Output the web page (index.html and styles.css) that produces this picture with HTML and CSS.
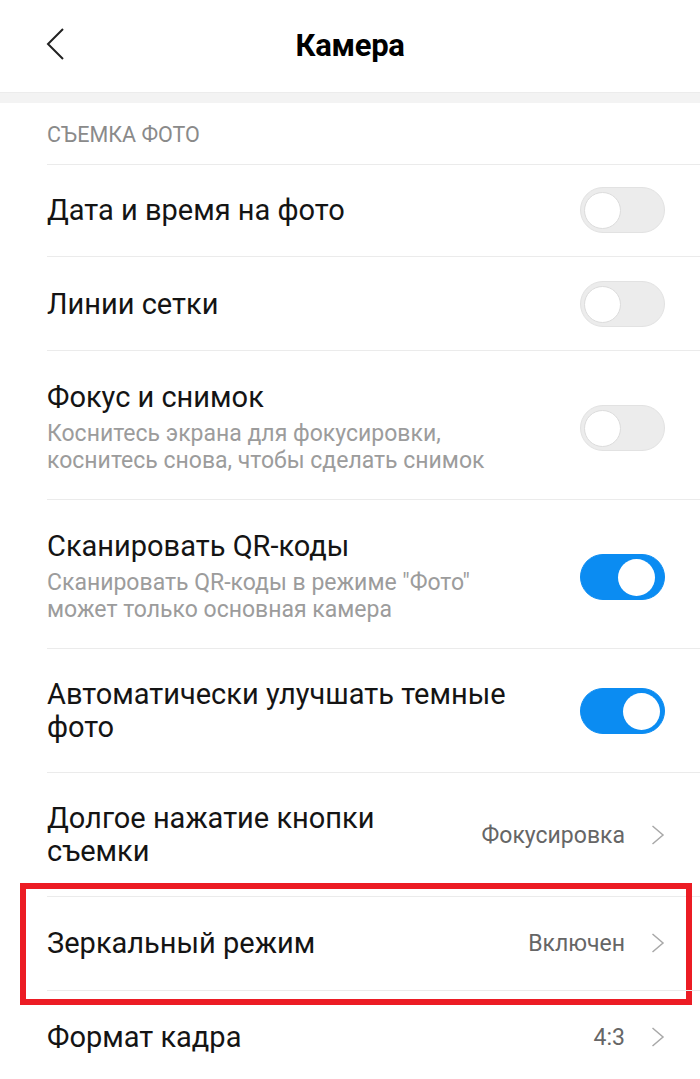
FILE: index.html
```html
<!DOCTYPE html>
<html lang="ru">
<head>
<meta charset="utf-8">
<title>Камера</title>
<link rel="stylesheet" href="styles.css">
</head>
<body>
<div class="screen">
  <header class="header">
    <svg class="back" width="22" height="34" viewBox="0 0 22 34"><polyline points="18,2 3,17 18,32" fill="none" stroke="#222" stroke-width="2" stroke-linejoin="miter"/></svg>
    <h1 class="title">Камера</h1>
  </header>
  <div class="band"></div>
  <div class="section">СЪЕМКА ФОТО</div>

  <div class="row">
    <div class="row-inner">
      <div class="text"><div class="label">Дата и время на фото</div></div>
      <div class="toggle"><span class="knob"></span></div>
    </div>
  </div>

  <div class="row">
    <div class="row-inner roomy">
      <div class="text"><div class="label">Линии сетки</div></div>
      <div class="toggle"><span class="knob"></span></div>
    </div>
  </div>

  <div class="row">
    <div class="row-inner with-sub">
      <div class="text">
        <div class="label">Фокус и снимок</div>
        <div class="sub">Коснитесь экрана для фокусировки,<br>коснитесь снова, чтобы сделать снимок</div>
      </div>
      <div class="toggle"><span class="knob"></span></div>
    </div>
  </div>

  <div class="row">
    <div class="row-inner with-sub">
      <div class="text">
        <div class="label">Сканировать QR-коды</div>
        <div class="sub">Сканировать QR-коды в режиме "Фото"<br>может только основная камера</div>
      </div>
      <div class="toggle on mid"><span class="knob"></span></div>
    </div>
  </div>

  <div class="row">
    <div class="row-inner two-line">
      <div class="text"><div class="label">Автоматически улучшать темные<br>фото</div></div>
      <div class="toggle on"><span class="knob"></span></div>
    </div>
  </div>

  <div class="row">
    <div class="row-inner two-line">
      <div class="text"><div class="label">Долгое нажатие кнопки<br>съемки</div></div>
      <div class="value">Фокусировка</div>
      <svg class="chev" width="14" height="20" viewBox="0 0 14 20"><polyline points="1.5,1 12,10 1.5,19" fill="none" stroke="#a8a8a8" stroke-width="1.5"/></svg>
    </div>
  </div>

  <div class="row">
    <div class="row-inner single-nav">
      <div class="text"><div class="label">Зеркальный режим</div></div>
      <div class="value">Включен</div>
      <svg class="chev" width="14" height="20" viewBox="0 0 14 20"><polyline points="1.5,1 12,10 1.5,19" fill="none" stroke="#a8a8a8" stroke-width="1.5"/></svg>
    </div>
    <div class="mark"></div>
  </div>

  <div class="row">
    <div class="row-inner single-nav">
      <div class="text"><div class="label">Формат кадра</div></div>
      <div class="value">4:3</div>
      <svg class="chev" width="14" height="20" viewBox="0 0 14 20"><polyline points="1.5,1 12,10 1.5,19" fill="none" stroke="#a8a8a8" stroke-width="1.5"/></svg>
    </div>
  </div>
</div>
</body>
</html>
```
FILE: styles.css
```css
html, body {
  margin: 0;
  padding: 0;
  background: #fff;
}
body {
  font-family: Roboto, "Noto Sans", "DejaVu Sans", sans-serif;
  color: #111;
  overflow: hidden;
}
.screen {
  width: 700px;
  height: 1079px;
  overflow: hidden;
}
.header {
  height: 92px;
  position: relative;
  display: flex;
  align-items: center;
  justify-content: center;
}
.back {
  position: absolute;
  left: 45px;
  top: 27px;
}
.title {
  margin: 0;
  font-size: 31px;
  font-weight: 700;
  color: #000;
  letter-spacing: -0.3px;
  padding-bottom: 2px;
}
.band {
  height: 11px;
  background: #f3f3f3;
  border-top: 1px solid #ececec;
  box-sizing: border-box;
}
.section {
  height: 61px;
  padding-left: 47px;
  display: flex;
  align-items: center;
  font-size: 21.5px;
  color: #8a8a8a;
  box-sizing: border-box;
  padding-top: 2px;
}
.row {
  position: relative;
}
.row-inner {
  margin-left: 47px;
  padding-right: 35px;
  border-top: 1px solid #ebebeb;
  display: flex;
  align-items: center;
  padding-top: 22px;
  padding-bottom: 23px;
}
.row-inner.roomy {
  padding-top: 24px;
  padding-bottom: 23px;
}
.row-inner.with-sub {
  padding-top: 30px;
  padding-bottom: 25px;
}
.row-inner.two-line {
  padding-top: 29px;
  padding-bottom: 28px;
}
.row-inner.single-nav {
  min-height: 46px;
  padding-top: 23px;
  padding-bottom: 24px;
}
.text {
  flex: 1;
  min-width: 0;
}
.label {
  font-size: 29px;
  line-height: 32px;
  color: #141414;
}
.two-line .label {
  line-height: 33px;
}
.sub {
  font-size: 23px;
  line-height: 27px;
  color: #9c9c9c;
  margin-top: 7px;
}
.toggle {
  width: 85px;
  height: 46px;
  border-radius: 23px;
  background: #ececec;
  border: 1px solid #e2e2e2;
  box-sizing: border-box;
  position: relative;
  flex: none;
}
.knob {
  position: absolute;
  top: 4px;
  left: 3px;
  width: 37px;
  height: 37px;
  border-radius: 50%;
  background: #fff;
  border: 1px solid #dcdcdc;
  box-sizing: border-box;
}
.toggle.on {
  background: #0b8cf2;
  border-color: #0b8cf2;
}
.toggle.on .knob {
  left: auto;
  right: 4px;
  border: none;
}
.toggle.on.mid .knob {
  right: 9px;
}
.value {
  font-size: 23px;
  color: #666;
  margin-right: 26px;
  flex: none;
}
.chev {
  flex: none;
  display: block;
}
.mark {
  position: absolute;
  left: 20px;
  right: 8px;
  top: -13px;
  bottom: -15px;
  border: 6px solid #ec1c24;
  pointer-events: none;
}
```
